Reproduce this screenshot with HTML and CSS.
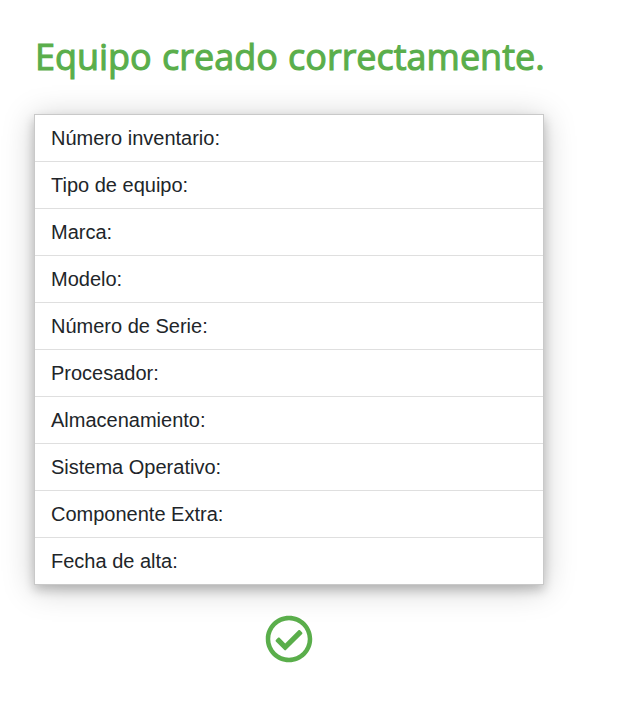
FILE: index.html
```html
<!DOCTYPE html>
<html lang="es">
<head>
<meta charset="utf-8">
<title>Equipo creado</title>
<link rel="stylesheet" href="styles.css">
</head>
<body>
<main class="panel">
<h1 class="title">Equipo creado correctamente.</h1>
<ul class="list">
<li>Número inventario:</li>
<li>Tipo de equipo:</li>
<li>Marca:</li>
<li>Modelo:</li>
<li>Número de Serie:</li>
<li>Procesador:</li>
<li>Almacenamiento:</li>
<li>Sistema Operativo:</li>
<li>Componente Extra:</li>
<li>Fecha de alta:</li>
</ul>
<svg class="check" viewBox="0 0 512 512" aria-hidden="true"><path fill="currentColor" d="M256 8C119.033 8 8 119.033 8 256s111.033 248 248 248 248-111.033 248-248S392.967 8 256 8zm0 48c110.532 0 200 89.451 200 200 0 110.532-89.451 200-200 200-110.532 0-200-89.451-200-200 0-110.532 89.451-200 200-200m140.204 130.267l-22.536-22.718c-4.667-4.705-12.265-4.736-16.97-.068L215.346 303.697l-59.792-60.277c-4.667-4.705-12.265-4.736-16.97-.069l-22.719 22.536c-4.705 4.667-4.736 12.265-.068 16.971l90.781 91.516c4.667 4.705 12.265 4.736 16.97.068l172.589-171.204c4.704-4.668 4.734-12.266.067-16.971z"/></svg>
</main>
</body>
</html>
```
FILE: styles.css
```css
* { box-sizing: border-box; }
body { margin: 0; background: #fff; color: #212529; font-family: "Liberation Sans", Arial, sans-serif; }
.panel { width: 510px; margin-left: 34px; padding-top: 32px; display: flex; flex-direction: column; align-items: center; }
.title { margin: 0 0 34px; padding-left: 1px; width: 100%; height: 48px; font: 400 37px/48px "Open Sans", "Noto Sans", sans-serif; word-spacing: 1px; color: #5aae4b; white-space: nowrap; transform: scaleX(.972); transform-origin: left; -webkit-text-stroke: 1.1px #5aae4b; }
.list { list-style: none; margin: 0; padding: 0; width: 100%; border: 1px solid #c9c9c9; background: #fff; box-shadow: 0 5px 10px rgba(0,0,0,.2), 0 4px 30px rgba(0,0,0,.21); }
.list li { height: 47px; padding: 0 16px; font-size: 20px; line-height: 46px; border-bottom: 1px solid #dfdfdf; }
.list li:last-child { height: 46px; border-bottom: 0; }
.check { width: 48px; height: 48px; margin-top: 30px; color: #5aae4b; }
```
